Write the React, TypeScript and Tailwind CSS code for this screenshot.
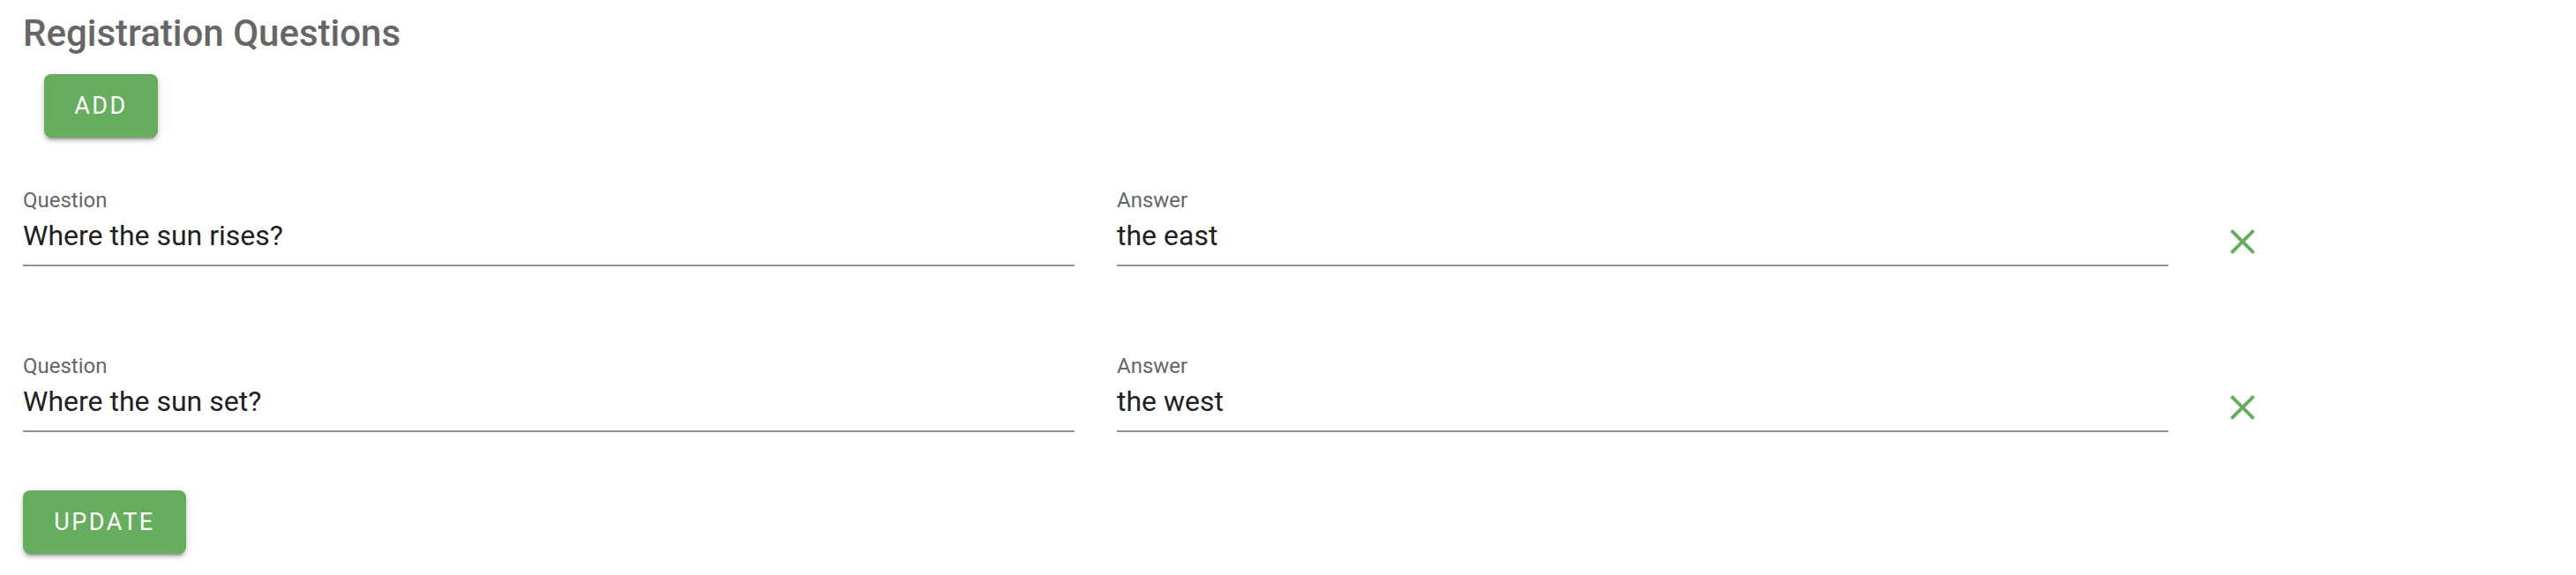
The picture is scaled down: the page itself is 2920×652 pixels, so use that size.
import React from "react";

const GREEN = "#66ad5e";

function CloseIcon() {
  return (
    <svg width="48" height="48" viewBox="0 0 24 24" fill={GREEN}>
      <path d="M19 6.41 17.59 5 12 10.59 6.41 5 5 6.41 10.59 12 5 17.59 6.41 19 12 13.41 17.59 19 19 17.59 13.41 12z" />
    </svg>
  );
}

function Field({ label, value, width }: { label: string; value: string; width: string }) {
  return (
    <div className={`flex flex-col ${width}`}>
      <div className="text-[24px] leading-[28px] text-[#666666]">{label}</div>
      <div className="mt-[6px] text-[32px] leading-[40px] text-[#212121]">{value}</div>
      <div className="mt-[13px] h-[2px] bg-[#949494]" />
    </div>
  );
}

function Row({ q, a }: { q: string; a: string }) {
  return (
    <div className="flex items-start">
      <Field label="Question" value={q} width="w-[1192px]" />
      <div className="ml-[48px]">
        <Field label="Answer" value={a} width="w-[1192px]" />
      </div>
      <div className="ml-[60px] mt-[37px] flex h-[48px] w-[48px] items-center justify-center">
        <CloseIcon />
      </div>
    </div>
  );
}

export default function App() {
  return (
    <div className="h-[652px] w-[2920px] bg-white pl-[26px] font-['Roboto',_'Liberation_Sans',_sans-serif]">
      <div className="pt-[12px] text-[42px] font-medium leading-[52px] text-[#666666]">
        Registration Questions
      </div>
      <button className="ml-[24px] mt-[20px] flex h-[72px] w-[129px] items-center justify-center rounded-[8px] bg-[#66ad5e] text-[27px] tracking-[2.5px] text-white shadow-[0_6px_2px_-4px_rgba(0,0,0,0.2),0_4px_4px_0_rgba(0,0,0,0.14),0_2px_10px_0_rgba(0,0,0,0.12)]">
        ADD
      </button>
      <div className="mt-[57px]">
        <Row q="Where the sun rises?" a="the east" />
      </div>
      <div className="mt-[99px]">
        <Row q="Where the sun set?" a="the west" />
      </div>
      <button className="mt-[66px] flex h-[72px] w-[185px] items-center justify-center rounded-[8px] bg-[#66ad5e] text-[27px] tracking-[2.5px] text-white shadow-[0_6px_2px_-4px_rgba(0,0,0,0.2),0_4px_4px_0_rgba(0,0,0,0.14),0_2px_10px_0_rgba(0,0,0,0.12)]">
        UPDATE
      </button>
    </div>
  );
}
